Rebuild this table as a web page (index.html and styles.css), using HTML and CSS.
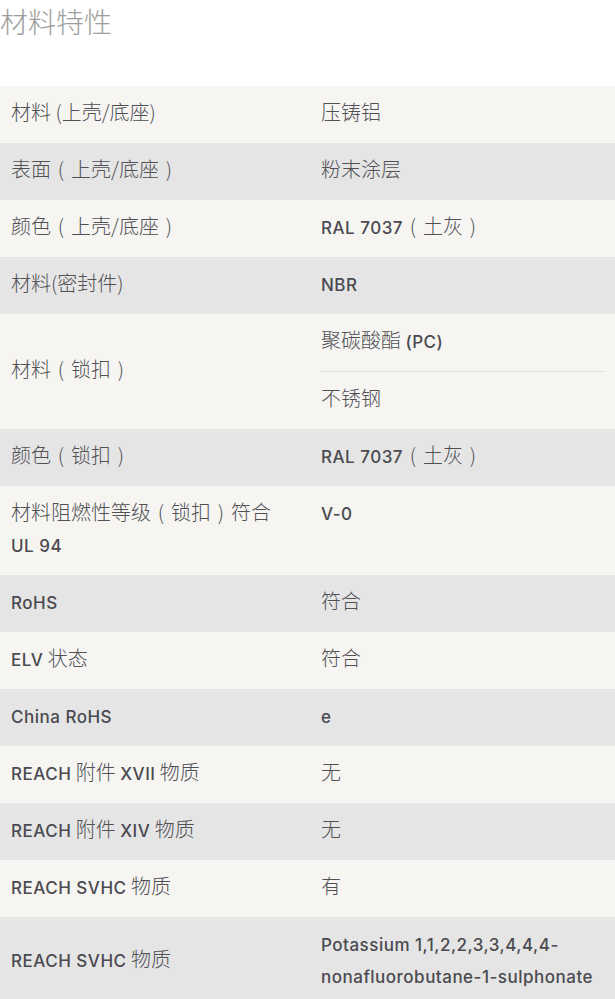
FILE: index.html
```html
<!DOCTYPE html>
<html lang="zh">
<head>
<meta charset="utf-8">
<link rel="stylesheet" href="styles.css">
</head>
<body>
<h2 class="title">材料特性</h2>
<table class="props">
  <tr><td class="k">材料 (上壳/底座)</td><td class="v">压铸铝</td></tr>
  <tr><td class="k">表面<span class="fw">(</span>上壳/底座<span class="fw">)</span></td><td class="v">粉末涂层</td></tr>
  <tr><td class="k">颜色<span class="fw">(</span>上壳/底座<span class="fw">)</span></td><td class="v"><span class="l">RAL 7037</span><span class="fw">(</span>土灰<span class="fw">)</span></td></tr>
  <tr><td class="k">材料(密封件)</td><td class="v"><span class="l">NBR</span></td></tr>
  <tr><td class="k">材料<span class="fw">(</span>锁扣<span class="fw">)</span></td><td class="v multi"><div class="sub">聚碳酸酯 <span class="l">(PC)</span></div><div class="sub">不锈钢</div></td></tr>
  <tr><td class="k">颜色<span class="fw">(</span>锁扣<span class="fw">)</span></td><td class="v"><span class="l">RAL 7037</span><span class="fw">(</span>土灰<span class="fw">)</span></td></tr>
  <tr><td class="k top">材料阻燃性等级<span class="fw">(</span>锁扣<span class="fw">)</span>符合 <span class="l">UL&nbsp;94</span></td><td class="v top"><span class="l">V-0</span></td></tr>
  <tr><td class="k"><span class="l">RoHS</span></td><td class="v">符合</td></tr>
  <tr><td class="k"><span class="l">ELV</span> 状态</td><td class="v">符合</td></tr>
  <tr><td class="k"><span class="l">China RoHS</span></td><td class="v"><span class="l">e</span></td></tr>
  <tr><td class="k"><span class="l">REACH</span> 附件 <span class="l">XVII</span> 物质</td><td class="v">无</td></tr>
  <tr><td class="k"><span class="l">REACH</span> 附件 <span class="l">XIV</span> 物质</td><td class="v">无</td></tr>
  <tr><td class="k"><span class="l">REACH SVHC</span> 物质</td><td class="v">有</td></tr>
  <tr><td class="k"><span class="l">REACH SVHC</span> 物质</td><td class="v"><span class="l">Potassium 1,1,2,2,3,3,4,4,4-nonafluorobutane-1-sulphonate</span></td></tr>
</table>
</body>
</html>
```
FILE: styles.css
```css
html, body {
  margin: 0;
  padding: 0;
  background: #ffffff;
}
body {
  font-family: "Noto Sans CJK SC", "Noto Sans", sans-serif;
  color: #505055;
}
.title {
  margin: 0 0 44px 0;
  font-size: 28px;
  line-height: 42px;
  font-weight: 300;
  color: #9e9e9b;
}
.props {
  width: 615px;
  border-collapse: collapse;
  font-size: 20px;
  line-height: 32px;
  font-weight: 300;
}
.props tr:nth-child(odd) { background: #f6f5f2; }
.props tr:nth-child(even) { background: #e5e5e5; }
.props td {
  padding: 10px 0 15px 0;
  vertical-align: middle;
}
.props td.top { vertical-align: top; }
.k {
  width: 299px;
  padding-left: 11px !important;
}
.v {
  padding-left: 11px !important;
  padding-right: 10px !important;
}
.v.multi {
  padding-top: 0 !important;
  padding-bottom: 0 !important;
}
.sub {
  padding: 10px 0 15px 0;
}
.sub + .sub {
  border-top: 1px solid #dcdcd8;
}
.fw {
  display: inline-block;
  width: 1em;
  text-align: center;
  line-height: 1;
}
.l {
  font-family: "Inter", sans-serif;
  font-size: 17px;
  font-weight: 500;
  letter-spacing: 0.5px;
  line-height: 1;
  color: #4a4a50;
}
```
